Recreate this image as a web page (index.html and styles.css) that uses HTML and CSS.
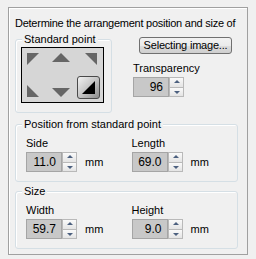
FILE: index.html
```html
<!DOCTYPE html>
<html lang="en">
<head>
    <meta charset="UTF-8">
    <title>Arrangement</title>
    <link rel="stylesheet" href="styles.css">
</head>
<body>
    <div class="panel">
        <p class="heading">Determine the arrangement position and size of</p>

        <div class="top-row">
            <div class="group standard">
                <span class="group-title">Standard point</span>
                <div class="pad">
                    <svg class="pad-arrows" width="81" height="54" viewBox="0 0 81 54">
                        <polygon points="5,5 17,5 5,17" />
                        <polygon points="30,14 48,14 39,5" />
                        <polygon points="63,5 75,5 75,17" />
                        <polygon points="5,37 5,49 17,49" />
                        <polygon points="30,40 48,40 39,49" />
                    </svg>
                    <button class="pad-btn">
                        <svg width="21" height="21" viewBox="0 0 21 21">
                            <polygon points="17,4 17,17 4,17" fill="#000" />
                        </svg>
                    </button>
                </div>
            </div>

            <div class="side-col">
                <button class="select-btn">Selecting image...</button>
                <div class="field">
                    <span class="field-label">Transparency</span>
                    <div class="spin">
                        <span class="spin-value">96</span>
                        <span class="spin-btns">
                            <span class="spin-up"></span>
                            <span class="spin-down"></span>
                        </span>
                    </div>
                </div>
            </div>
        </div>

        <div class="group wide">
            <span class="group-title">Position from standard point</span>
            <div class="field">
                <span class="field-label">Side</span>
                <div class="spin">
                    <span class="spin-value">11.0</span>
                    <span class="spin-btns">
                        <span class="spin-up"></span>
                        <span class="spin-down"></span>
                    </span>
                    <span class="unit">mm</span>
                </div>
            </div>
            <div class="field">
                <span class="field-label">Length</span>
                <div class="spin">
                    <span class="spin-value">69.0</span>
                    <span class="spin-btns">
                        <span class="spin-up"></span>
                        <span class="spin-down"></span>
                    </span>
                    <span class="unit">mm</span>
                </div>
            </div>
        </div>

        <div class="group wide">
            <span class="group-title">Size</span>
            <div class="field">
                <span class="field-label">Width</span>
                <div class="spin">
                    <span class="spin-value">59.7</span>
                    <span class="spin-btns">
                        <span class="spin-up"></span>
                        <span class="spin-down"></span>
                    </span>
                    <span class="unit">mm</span>
                </div>
            </div>
            <div class="field">
                <span class="field-label">Height</span>
                <div class="spin">
                    <span class="spin-value">9.0</span>
                    <span class="spin-btns">
                        <span class="spin-up"></span>
                        <span class="spin-down"></span>
                    </span>
                    <span class="unit">mm</span>
                </div>
            </div>
        </div>
    </div>
</body>
</html>
```

FILE: styles.css
```css
* {
    margin: 0;
    padding: 0;
    box-sizing: border-box;
}

body {
    font-family: 'Liberation Sans', Arial, sans-serif;
    font-size: 11px;
    line-height: 13px;
    color: #000;
    background: #f0f0f0;
    padding: 7px 8px 0 8px;
}

.panel {
    width: 240px;
    height: 248px;
    border: 1px solid #a0a0a0;
    box-shadow: inset 1px 1px 0 #fff;
    padding: 9px 6px 0 6px;
}

.heading {
    white-space: nowrap;
    letter-spacing: -0.25px;
}

.top-row {
    display: flex;
    margin-top: 9px;
}

.group {
    position: relative;
    border: 1px solid #d5dfe5;
    border-radius: 3px;
    box-shadow: inset 1px 1px 0 #fff;
}

.group-title {
    position: absolute;
    top: -7px;
    left: 6px;
    padding: 0 2px;
    background: #f0f0f0;
    white-space: nowrap;
}

.standard {
    width: 97px;
    height: 74px;
    padding: 7px 0 0 5px;
}

.pad {
    position: relative;
    width: 83px;
    height: 56px;
    border: 1px solid #000;
    background: #d6d6d6;
}

.pad-arrows {
    display: block;
    fill: #666;
}

.pad-btn {
    position: absolute;
    left: 55px;
    top: 28px;
    width: 23px;
    height: 23px;
    border: 1px solid #4a4a4a;
    border-radius: 3px;
    background: linear-gradient(135deg, #f2f2f2 0%, #c4c4c4 50%, #8c8c8c 100%);
}

.pad-btn svg {
    display: block;
}

.side-col {
    margin-left: 21px;
    display: flex;
    flex-direction: column;
}

.select-btn {
    margin: -2px 0 0 6px;
    width: 93px;
    height: 17px;
    font: inherit;
    letter-spacing: -0.2px;
    color: #000;
    border: 1px solid #707070;
    border-radius: 3px;
    background: linear-gradient(#f2f2f2 0%, #ebebeb 50%, #dddddd 51%, #cfcfcf 100%);
}

.side-col .field {
    margin-top: 8px;
}

.field-label {
    display: block;
    margin-bottom: 2px;
}

.spin {
    display: flex;
    align-items: center;
    height: 20px;
}

.spin-value {
    width: 36px;
    height: 20px;
    border: 1px solid #a5a5a5;
    background: #c8c8c8;
    text-align: right;
    padding-right: 5px;
    line-height: 18px;
    font-size: 12px;
}

.spin-btns {
    display: flex;
    flex-direction: column;
    width: 15px;
    height: 20px;
}

.spin-up,
.spin-down {
    position: relative;
    flex: 1;
    border: 1px solid #b9b9b9;
    background: linear-gradient(#fafafa, #e4e4e4);
}

.spin-down {
    border-top: none;
}

.spin-up::after,
.spin-down::after {
    content: "";
    position: absolute;
    left: 4px;
    border-left: 3px solid transparent;
    border-right: 3px solid transparent;
}

.spin-up::after {
    top: 2px;
    border-bottom: 3px solid #4c607f;
}

.spin-down::after {
    top: 3px;
    border-top: 3px solid #4c607f;
}

.unit {
    margin-left: 8px;
}

.wide {
    display: flex;
    width: 223px;
    height: 58px;
    margin-top: 11px;
    padding: 12px 0 0 10px;
}

.wide .field {
    width: 108px;
}

.wide + .wide {
    margin-top: 9px;
}
```
